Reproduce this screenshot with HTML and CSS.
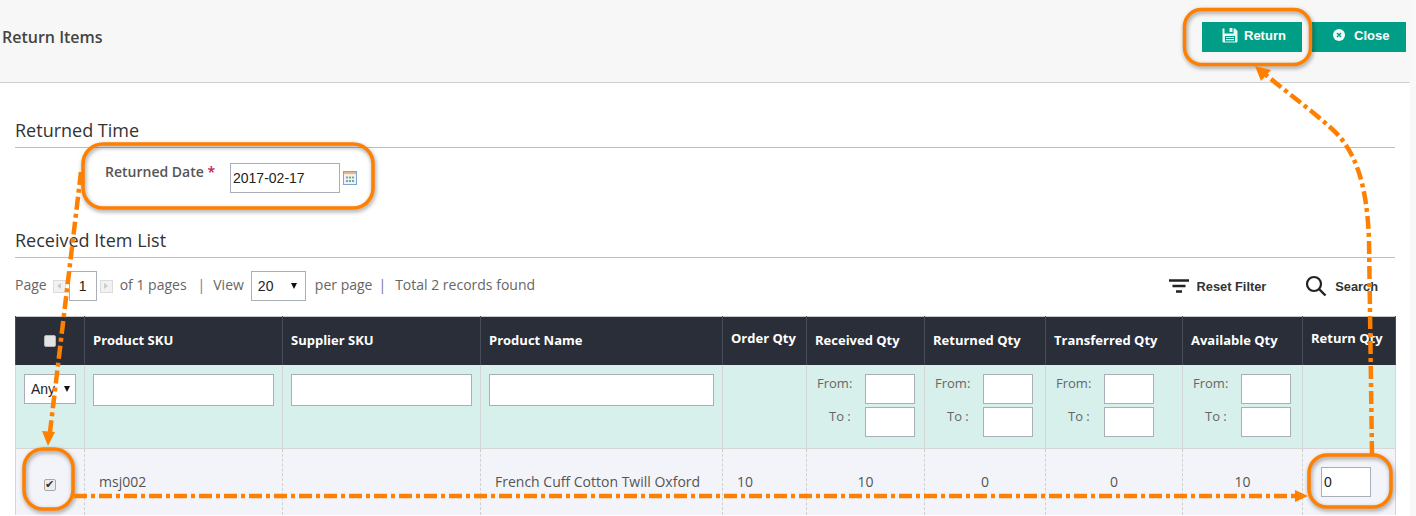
FILE: index.html
```html
<!DOCTYPE html>
<html>
<head>
    <link rel="stylesheet" href="styles.css">
</head>

<body>
    <div class="page">
        <div class="top_bar">
            <h1 class="top_title">Return Items</h1>
            <div class="top_buttons">
                <button class="action_btn return_btn">
                    <svg class="btn_icon" width="16" height="16" viewBox="0 0 16 16">
                        <path d="M0.500 1.500h2v5h9v-5h1.600l2.400 2.400v10.600a1 1 0 0 1-1 1h-13a1 1 0 0 1-1-1z" fill="#e6f7f4"/>
                        <rect x="7.500" y="1" width="3" height="4" fill="#e6f7f4"/>
                        <rect x="3" y="9" width="10" height="5.500" fill="#009e87"/>
                        <path d="M4 10.500h8M4 12.700h8" stroke="#e6f7f4" stroke-width="1.200"/>
                    </svg>
                    Return
                </button>
                <button class="action_btn close_btn">
                    <svg class="btn_icon" width="12" height="12" viewBox="0 0 12 12">
                        <circle cx="6" cy="6" r="6" fill="#f2fbf9"/>
                        <path d="M4 4l4 4M8 4l-4 4" stroke="#009e87" stroke-width="1.500"/>
                    </svg>
                    Close
                </button>
            </div>
        </div>

        <div class="content">
            <h2 class="section_title first_title">Returned Time</h2>
            <div class="date_row">
                <label class="date_label">Returned Date <span class="required">*</span></label>
                <input class="date_input" type="text" value="2017-02-17">
                <svg class="calendar_icon" width="14" height="14" viewBox="0 0 14 14">
                    <rect x="0.500" y="0.500" width="13" height="13" fill="#eef3fa" stroke="#7aa5d6"/>
                    <rect x="1" y="1" width="12" height="2" fill="#eeb27e"/>
                    <path d="M1 3h12v1H1z" fill="#f7f0e4"/>
                    <path d="M3 5.500h2v2H3zM9 5.500h2v2H9zM3 9h2v2H3z" fill="#8c9bb0"/>
                    <path d="M6 5.500h2v2H6zM6 9h2v2H6zM9 9h2v2H9z" fill="#6bb26a"/>
                </svg>
            </div>

            <h2 class="section_title second_title">Received Item List</h2>
            <div class="pager_row">
                <div class="pager">
                    <span class="pager_text">Page</span>
                    <span class="page_arrow first_arrow"><i class="arrow_left"></i></span>
                    <input class="page_input" type="text" value="1">
                    <span class="page_arrow"><i class="arrow_right"></i></span>
                    <span class="pager_text after_arrow">of 1 pages</span>
                    <span class="pager_text sep">|</span>
                    <span class="pager_text">View</span>
                    <div class="fake_select view_select"><span>20</span><i class="caret"></i></div>
                    <span class="pager_text">per page</span>
                    <span class="pager_text sep sep_tight">|</span>
                    <span class="pager_text">Total 2 records found</span>
                </div>
                <div class="tools">
                    <span class="tool reset_tool">
                        <svg width="20" height="15" viewBox="0 0 20 15">
                            <path d="M0 1.500h20M3.500 7h13M7 12.500h6" stroke="#222" stroke-width="2.400"/>
                        </svg>
                        Reset Filter
                    </span>
                    <span class="tool">
                        <svg width="22" height="22" viewBox="0 0 22 22">
                            <circle cx="9" cy="9" r="7" fill="none" stroke="#222" stroke-width="2.200"/>
                            <path d="M14 14l6.500 6.500" stroke="#222" stroke-width="2.400"/>
                        </svg>
                        Search
                    </span>
                </div>
            </div>

            <table class="grid">
                <colgroup>
                    <col class="c_check"><col class="c_sku"><col class="c_sku"><col class="c_name">
                    <col class="c_order"><col class="c_received"><col class="c_returned">
                    <col class="c_transferred"><col class="c_available"><col class="c_return">
                </colgroup>
                <thead>
                    <tr class="head_row">
                        <th class="center"><input class="check_box" type="checkbox"></th>
                        <th>Product SKU</th>
                        <th>Supplier SKU</th>
                        <th>Product Name</th>
                        <th class="raised">Order Qty</th>
                        <th>Received Qty</th>
                        <th>Returned Qty</th>
                        <th>Transferred Qty</th>
                        <th>Available Qty</th>
                        <th class="raised">Return Qty</th>
                    </tr>
                    <tr class="filter_row">
                        <td><div class="fake_select any_select"><span>Any</span><i class="caret"></i></div></td>
                        <td><input class="filter_text" type="text"></td>
                        <td><input class="filter_text" type="text"></td>
                        <td><input class="filter_text" type="text"></td>
                        <td></td>
                        <td>
                            <div class="range">
                                <label class="from">From:</label><input type="text">
                                <label class="to">To :</label><input type="text">
                            </div>
                        </td>
                        <td>
                            <div class="range">
                                <label class="from">From:</label><input type="text">
                                <label class="to">To :</label><input type="text">
                            </div>
                        </td>
                        <td>
                            <div class="range">
                                <label class="from">From:</label><input type="text">
                                <label class="to">To :</label><input type="text">
                            </div>
                        </td>
                        <td>
                            <div class="range">
                                <label class="from">From:</label><input type="text">
                                <label class="to">To :</label><input type="text">
                            </div>
                        </td>
                        <td></td>
                    </tr>
                </thead>
                <tbody>
                    <tr class="data_row">
                        <td class="center"><input class="check_box row_check" type="checkbox" checked></td>
                        <td class="sku_cell">msj002</td>
                        <td></td>
                        <td class="name_cell">French Cuff Cotton Twill Oxford</td>
                        <td class="order_cell">10</td>
                        <td class="center">10</td>
                        <td class="center">0</td>
                        <td class="center">0</td>
                        <td class="center">10</td>
                        <td><input class="qty_input" type="text" value="0"></td>
                    </tr>
                </tbody>
            </table>
        </div>

        <!-- orange callouts drawn on top of the screen -->
        <svg class="callouts" width="1416" height="516" viewBox="0 0 1416 516">
            <g class="ring">
                <rect x="1184.500" y="9.500" width="126" height="55" rx="17"/>
                <rect x="83" y="144" width="290" height="64" rx="20"/>
                <rect x="24" y="449" width="49" height="60" rx="19"/>
                <rect x="1309" y="455" width="82" height="52" rx="18"/>
            </g>
            <g class="trail">
                <path d="M81 172L50 432"/>
                <path d="M74 496H1296"/>
                <path d="M1372 454L1369 240C1367 185 1356 150 1331 128C1312 111 1288 93 1266 75"/>
            </g>
            <g class="tips">
                <path d="M48 446L42 431L55 432Z"/>
                <path d="M1308 496L1295 490V502Z"/>
                <path d="M1255 66L1271 70L1261 81Z"/>
            </g>
        </svg>
    </div>
</body>

</html>
```

FILE: styles.css
```css
/* General page styles */
html, body {
    margin: 0;
    padding: 0;
    height: 516px;
    overflow: hidden;
}

body {
    font-family: "Open Sans", Arial, sans-serif;
    font-size: 14px;
    color: #555;
    background-color: #f8f8f8;
}

.page {
    width: 1410px;
    height: 516px;
    background-color: #fff;
}

input {
    box-sizing: border-box;
    margin: 0;
    padding: 0 2px;
    border: 1px solid #a9afb8;
    background-color: #fff;
    font-family: "Liberation Sans", Arial, sans-serif;
    font-size: 13px;
    color: #222;
}

/* Top bar */
.top_bar {
    box-sizing: border-box;
    height: 83px;
    display: flex;
    justify-content: space-between;
    align-items: center;
    padding: 0 4px 9px 2px;
    background-color: #f7f7f7;
    border-bottom: 1px solid #cfcfd4;
}

.top_title {
    margin: 0;
    font-size: 16px;
    font-weight: 600;
    color: #444;
}

.top_buttons {
    display: flex;
    gap: 10px;
}

.action_btn {
    height: 30px;
    display: flex;
    align-items: center;
    border: none;
    background-color: #009e87;
    color: #fff;
    font-family: "Liberation Sans", Arial, sans-serif;
    font-size: 13px;
    font-weight: bold;
}

.return_btn {
    width: 100px;
    gap: 6px;
    padding: 0 0 3px 20px;
}

.close_btn {
    width: 94px;
    gap: 9px;
    padding: 0 0 3px 21px;
}

/* Sections */
.content {
    padding: 0 15px;
}

.section_title {
    margin: 0;
    height: 30px;
    line-height: 26px;
    font-size: 18px;
    font-weight: 400;
    color: #333;
    border-bottom: 1px solid #bdbdc2;
}

.first_title {
    margin-top: 34px;
}

.second_title {
    margin-top: 18px;
}

.date_row {
    height: 46px;
    margin-top: 15px;
    display: flex;
    align-items: flex-start;
    padding-left: 90px;
}

.date_label {
    width: 125px;
    margin-top: -1px;
    font-weight: 600;
    font-size: 14px;
    color: #555;
    line-height: 19px;
}

.required {
    color: #c2185b;
}

.date_input {
    width: 110px;
    height: 30px;
    font-size: 14px;
}

.calendar_icon {
    margin: 8px 0 0 3px;
}

/* Pager and tools */
.pager_row {
    height: 58px;
    display: flex;
    justify-content: space-between;
    align-items: flex-start;
    padding-top: 13px;
    box-sizing: border-box;
}

.pager {
    display: flex;
    align-items: center;
    height: 30px;
    color: #666;
    white-space: nowrap;
}

.pager_text {
    margin-bottom: 4px;
}

.page_arrow {
    box-sizing: border-box;
    width: 13px;
    height: 13px;
    margin-left: 3px;
    display: flex;
    align-items: center;
    justify-content: center;
    background-color: #f2f2f2;
    border: 1px solid #dcdcdc;
}

.first_arrow {
    margin: 0 3px 0 6px;
}

.arrow_left {
    border-right: 4px solid #ccc;
    border-top: 3px solid transparent;
    border-bottom: 3px solid transparent;
}

.arrow_right {
    border-left: 4px solid #ccc;
    border-top: 3px solid transparent;
    border-bottom: 3px solid transparent;
}

.page_input {
    width: 28px;
    height: 30px;
    text-align: center;
    font-size: 14px;
}

.after_arrow {
    margin-left: 7px;
}

.sep {
    margin: 0 8px 4px 11px;
    color: #7b6f9e;
}

.sep_tight {
    margin: 0 9px 4px 6px;
}

.fake_select {
    box-sizing: border-box;
    display: flex;
    align-items: center;
    justify-content: space-between;
    height: 30px;
    border: 1px solid #a9afb8;
    background-color: #fff;
    font-family: "Liberation Sans", Arial, sans-serif;
    color: #222;
}

.view_select {
    width: 55px;
    margin: 0 9px 0 7px;
    padding: 0 8px 0 6px;
    font-size: 14px;
}

.any_select {
    width: 52px;
    padding: 0 5px 0 6px;
    font-size: 14px;
}

.caret {
    border-top: 6px solid #111;
    border-left: 3.5px solid transparent;
    border-right: 3.5px solid transparent;
}

.tools {
    display: flex;
    align-items: center;
    height: 30px;
    gap: 39px;
    padding-right: 17px;
}

.tool {
    display: flex;
    align-items: center;
    gap: 8px;
    font-family: "Liberation Sans", Arial, sans-serif;
    font-size: 12.8px;
    font-weight: bold;
    color: #333;
}

/* Grid */
.grid {
    box-sizing: border-box;
    width: 1380px;
    table-layout: fixed;
    border-collapse: collapse;
    border-top: 1px solid #c9c9c9;
}

.c_check { width: 69px; }
.c_sku { width: 198px; }
.c_name { width: 242px; }
.c_order { width: 84px; }
.c_received { width: 118px; }
.c_returned { width: 121px; }
.c_transferred { width: 137px; }
.c_available { width: 120px; }
.c_return { width: 93px; }

.head_row {
    height: 48px;
    background-color: #2a2e38;
}

.head_row th {
    padding: 0 8px 2px;
    text-align: left;
    font-size: 13px;
    font-weight: 700;
    color: #fff;
    border-left: 1px solid #474c58;
    border-right: 1px solid #474c58;
    white-space: nowrap;
}

.head_row th.raised {
    padding-bottom: 6px;
}

.head_row th.center {
    text-align: center;
}

.check_box {
    appearance: none;
    display: inline-block;
    position: relative;
    width: 12px;
    height: 12px;
    padding: 0;
    vertical-align: middle;
    background-color: #e3e3e3;
    border: 1px solid #b5b5b5;
    border-radius: 2px;
}

.row_check {
    margin-top: 2px;
    background-color: #ececec;
    border-color: #a8a8a8;
}

.row_check::after {
    content: "\2714";
    position: absolute;
    left: 0;
    top: -2px;
    font-family: "DejaVu Sans", sans-serif;
    font-size: 11px;
    line-height: 14px;
    color: #333;
}

.filter_row {
    height: 84px;
    background-color: #d7f0ec;
}

.filter_row td {
    padding: 9px 8px 0;
    vertical-align: top;
    border: 1px solid #d6d6d6;
    border-top: none;
}

.filter_text {
    display: block;
    width: 100%;
    height: 32px;
}

.range {
    display: grid;
    grid-template-columns: 50px 50px;
    row-gap: 3px;
}

.range label {
    font-size: 13px;
    line-height: 18px;
    color: #666;
}

.range .from {
    padding-left: 2px;
}

.range .to {
    padding-left: 14px;
}

.range input {
    width: 50px;
    height: 30px;
}

.data_row {
    height: 66px;
    background-color: #f3f4f9;
    color: #555;
}

.data_row td {
    padding: 0;
    border-left: 1px dashed #cfcfcf;
    border-right: 1px dashed #cfcfcf;
    vertical-align: middle;
}

.data_row td:first-child {
    border-left: 1px solid #d6d6d6;
}

.data_row td:last-child {
    border-right: 1px solid #d6d6d6;
}

.center {
    text-align: center;
}

.sku_cell {
    padding-left: 14px !important;
}

.name_cell {
    padding-left: 14px !important;
}

.order_cell {
    padding-left: 14px !important;
}

.qty_input {
    display: block;
    width: 50px;
    height: 30px;
    margin-left: 18px;
    font-size: 14px;
}

/* Callouts over the screen */
.callouts {
    position: absolute;
    left: 0;
    top: 0;
    pointer-events: none;
}

.ring rect {
    fill: none;
    stroke: #ff8000;
    stroke-width: 3.5;
    filter: drop-shadow(1px 2px 2px rgba(0, 0, 0, 0.4));
}

.trail path {
    fill: none;
    stroke: #ff8000;
    stroke-width: 4.5;
    stroke-dasharray: 13 4 4 4;
}

.tips path {
    fill: #ff8000;
}
```
